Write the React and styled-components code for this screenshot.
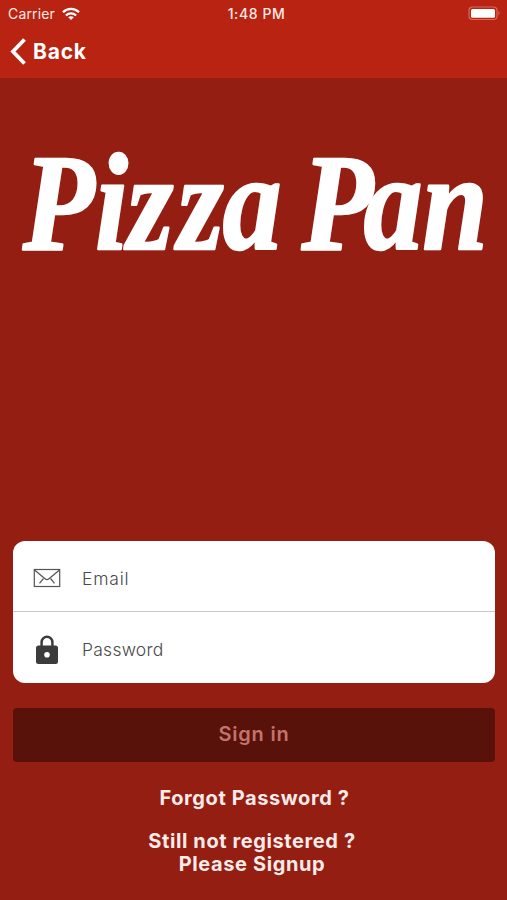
import React from 'react';
import styled, { createGlobalStyle } from 'styled-components';

const GlobalStyle = createGlobalStyle`
    * {
        box-sizing: border-box;
    }
    body {
        margin: 0;
        background: #931e11;
        font-family: Inter, "Liberation Sans", sans-serif;
        color: #fcebe8;
    }
`;
const Screen = styled.div`
    width: 100%;
    height: 900px;
    display: flex;
    flex-direction: column;
    overflow: hidden;
    background: #931e11;
`;
const Header = styled.header`
    height: 78px;
    flex: none;
    background: #b82312;
`;
const StatusBar = styled.div`
    height: 27px;
    display: grid;
    grid-template-columns: 1fr auto 1fr;
    align-items: center;
    padding: 0 6px 0 8px;
    font-size: 14px;
    line-height: 27px;
`;
const Carrier = styled.div`
    display: flex;
    align-items: center;
    gap: 7px;
    letter-spacing: 0.15px;
`;
const Clock = styled.div`
    padding-left: 4px;
    font-weight: 500;
    letter-spacing: 0.6px;
`;
const Battery = styled.svg`
    justify-self: end;
    display: block;
`;
const BackButton = styled.button`
    display: flex;
    align-items: center;
    gap: 6px;
    height: 49px;
    padding: 0 0 0 10px;
    border: 0;
    background: none;
    font-family: inherit;
    font-size: 21px;
    font-weight: 700;
    letter-spacing: 0.8px;
    color: white;
`;
const LogoArea = styled.div`
    flex: 1;
    padding-top: 32px;
`;
const Logo = styled.svg`
    display: block;
    width: 100%;
    height: 200px;
    overflow: visible;
    font-family: "Liberation Serif", serif;
    font-style: italic;
    font-weight: bold;
    fill: white;
    stroke: white;
    stroke-width: 2.6;
    stroke-linejoin: round;
`;
const Form = styled.form`
    flex: none;
    height: 360px;
    display: flex;
    flex-direction: column;
    padding: 1px 12px 0 13px;
`;
const Fields = styled.div`
    height: 142px;
    border-radius: 12px;
    background: white;
    overflow: hidden;
`;
const Field = styled.label`
    display: flex;
    align-items: center;
    height: 71px;
    padding: 4px 20px 0;
    ${props => (props.$divided && 'border-bottom: 1px solid #c8c8c8')};
`;
const FieldIcon = styled.svg`
    flex: none;
    width: 28px;
    height: 30px;
    margin-right: 21px;
`;
const Input = styled.input`
    flex: 1;
    min-width: 0;
    padding: 0;
    border: 0;
    outline: 0;
    background: none;
    font-family: inherit;
    font-size: 17.5px;
    font-weight: 300;
    letter-spacing: ${props => props.$spacing};
    color: #4a4a4a;
    &::placeholder {
        color: #4a4a4a;
        opacity: 1;
    }
`;
const SignIn = styled.button`
    height: 54px;
    margin-top: 25px;
    padding: 0 0 2px;
    border: 0;
    border-radius: 4px;
    background: #59120a;
    font-family: inherit;
    font-size: 20px;
    font-weight: 600;
    letter-spacing: 0.8px;
    color: #c4736c;
`;
const Link = styled.a`
    align-self: center;
    text-align: center;
    font-size: 20px;
    font-weight: 700;
    line-height: 23px;
    letter-spacing: 0.6px;
    margin-top: ${props => props.$top};
    margin-left: ${props => props.$shift || '1px'};
`;

const WifiIcon = () =>
    <svg width="18" height="14" viewBox="0 0 18 14" fill="none" stroke="#fff" strokeWidth="2.3">
        <path d="M1 5.2C5.5 0.7 12.5 0.7 17 5.2" />
        <path d="M3.9 8.5C6.8 5.7 11.2 5.7 14.1 8.5" />
        <path d="M9 13L6.2 10.2C7.8 8.8 10.2 8.8 11.8 10.2Z" fill="#fff" stroke="none" />
    </svg>

const App = () =>
    <Screen>
        <GlobalStyle />
        <Header>
            <StatusBar>
                <Carrier>Carrier <WifiIcon /></Carrier>
                <Clock>1:48 PM</Clock>
                <Battery width="33" height="15" viewBox="0 0 33 15">
                    <rect x="1" y="1" width="28" height="12.5" rx="3.5" fill="none" stroke="#d8695d" strokeWidth="1.2" />
                    <rect x="3" y="3" width="24" height="8.7" rx="1.5" fill="#fff" />
                    <path d="M30.5 5Q32.8 7.2 30.5 9.5Z" fill="#d8695d" />
                </Battery>
            </StatusBar>
            <BackButton>
                <svg width="17" height="27" viewBox="0 0 17 27" fill="none" stroke="#fff" strokeWidth="3.8">
                    <path d="M14.5 1.5L3 13.5L14.5 25.5" />
                </svg>
                Back
            </BackButton>
        </Header>
        <LogoArea>
            <Logo viewBox="0 0 507 200">
                <text y="139" fontSize="138" transform="scale(0.85 1)" x="27 112 150 209 262 330 355 428 497">Pizza Pan</text>
            </Logo>
        </LogoArea>
        <Form>
            <Fields>
                <Field $divided>
                    <FieldIcon viewBox="0 0 28 30" fill="none" stroke="#555" strokeWidth="1.2">
                        <rect x="1.3" y="6.5" width="25.4" height="17" />
                        <path d="M1.5 7L12 15.8Q14 17.5 16 15.8L26.5 7" />
                        <path d="M6.5 20.3L10.5 15.5M21.5 20.3L17.5 15.5" />
                    </FieldIcon>
                    <Input type="email" placeholder="Email" $spacing="0.8px" />
                </Field>
                <Field>
                    <FieldIcon viewBox="0 0 28 30">
                        <path d="M8.6 12V7.2a5.4 5.4 0 0 1 10.8 0V12" fill="none" stroke="#3c3c3c" strokeWidth="2.5" />
                        <rect x="3" y="10.5" width="22" height="18.5" rx="2.5" fill="#3c3c3c" />
                        <circle cx="14" cy="19.7" r="2.8" fill="#fff" />
                    </FieldIcon>
                    <Input type="password" placeholder="Password" $spacing="0.25px" />
                </Field>
            </Fields>
            <SignIn type="button">Sign in</SignIn>
            <Link $top="25px">Forgot Password ?</Link>
            <Link $top="20px" $shift="-4px">Still not registered ?<br />Please Signup</Link>
        </Form>
    </Screen>

export default App;
